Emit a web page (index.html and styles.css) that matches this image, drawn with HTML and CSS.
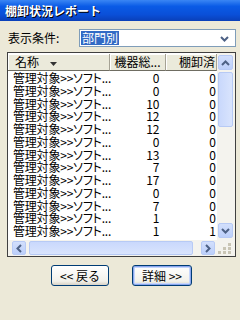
FILE: index.html
```html
<!DOCTYPE html>
<html lang="ja">
<head>
  <meta charset="UTF-8" />
  <title>棚卸状況レポート</title>
  <link rel="stylesheet" href="styles.css">
</head>
<body>
  <div class="titlebar"><span class="title">棚卸状況レポート</span></div>

  <div class="content">
    <div class="filter-row">
      <label class="filter-label">表示条件:</label>
      <div class="combo">
        <span class="combo-value">部門別</span>
        <svg class="combo-arrow" width="9" height="6" viewBox="0 0 9 6"><path d="M1 1 L4.5 4.5 L8 1" fill="none" stroke="#4d6185" stroke-width="2"/></svg>
      </div>
    </div>

    <div class="listview">
      <div class="list-main">
        <div class="list-body">
          <div class="list-header">
            <div class="head col-name">名称 <svg class="sort" width="7" height="4" viewBox="0 0 7 4"><path d="M0 0 H7 L3.5 4 Z" fill="#333"/></svg></div>
            <div class="head col-total">機器総...</div>
            <div class="head col-done">棚卸済</div>
          </div>
          <div id="rows"></div>
        </div>
        <div class="vscroll">
          <div class="sbtn"><svg width="9" height="6" viewBox="0 0 9 6"><path d="M1 5 L4.5 1.5 L8 5" fill="none" stroke="#4d6185" stroke-width="2"/></svg></div>
          <div class="vthumb"></div>
          <div class="sbtn down"><svg width="9" height="6" viewBox="0 0 9 6"><path d="M1 1 L4.5 4.5 L8 1" fill="none" stroke="#4d6185" stroke-width="2"/></svg></div>
        </div>
      </div>
      <div class="hscroll">
        <div class="sbtn hbtn"><svg width="6" height="9" viewBox="0 0 6 9"><path d="M5 1 L1.5 4.5 L5 8" fill="none" stroke="#4d6185" stroke-width="2"/></svg></div>
        <div class="hthumb"></div>
        <div class="sbtn hbtn"><svg width="6" height="9" viewBox="0 0 6 9"><path d="M1 1 L4.5 4.5 L1 8" fill="none" stroke="#4d6185" stroke-width="2"/></svg></div>
        <svg class="grip" width="14" height="14" viewBox="0 0 14 14">
          <rect x="10" y="2" width="3" height="3" fill="#c9c5b5"/>
          <rect x="5" y="6" width="3" height="3" fill="#c9c5b5"/>
          <rect x="10" y="6" width="3" height="3" fill="#c9c5b5"/>
          <rect x="0" y="10" width="3" height="3" fill="#c9c5b5"/>
          <rect x="5" y="10" width="3" height="3" fill="#c9c5b5"/>
          <rect x="10" y="10" width="3" height="3" fill="#c9c5b5"/>
        </svg>
      </div>
    </div>

    <div class="buttons">
      <button class="btn">&lt;&lt; 戻る</button>
      <button class="btn default">詳細 &gt;&gt;</button>
    </div>
  </div>

  <script>
    const totals = [0, 0, 10, 12, 12, 0, 13, 7, 17, 0, 7, 1, 1];
    const done = [0, 0, 0, 0, 0, 0, 0, 0, 0, 0, 0, 0, 1];
    const rows = document.getElementById('rows');
    totals.forEach((t, i) => {
      rows.innerHTML += `<div class="row"><div class="cell col-name">管理対象&gt;&gt;ソフト...</div><div class="cell col-total num">${t}</div><div class="cell col-done num">${done[i]}</div></div>`;
    });
  </script>
</body>
</html>
```

FILE: styles.css
```css
* {
  box-sizing: border-box;
}

body {
  margin: 0;
  width: 240px;
  height: 320px;
  overflow: hidden;
  background: #ece9d8;
  font-family: "Noto Sans CJK JP", "Noto Sans", sans-serif;
  font-size: 12px;
  color: #000;
}

.titlebar {
  height: 21px;
  padding-left: 5px;
  display: flex;
  align-items: center;
  background: linear-gradient(#3a86f4, #0a5be6 30%, #0a4fd8 70%, #0a3fb8);
}

.title {
  color: #fff;
  font-weight: bold;
  line-height: 14px;
  text-shadow: 1px 1px 0 #000;
}

.content {
  padding: 8px 4px 0 7px;
}

.filter-row {
  display: flex;
  align-items: center;
  height: 18px;
}

.filter-label {
  width: 72px;
  padding-left: 1px;
  line-height: 14px;
}

.combo {
  flex: 1;
  height: 18px;
  padding: 1px;
  display: flex;
  align-items: center;
  border: 1px solid #7f9db9;
  background: #fff;
}

.combo-value {
  height: 100%;
  padding: 0 1px;
  line-height: 14px;
  background: #316ac5;
  color: #fff;
}

.combo-arrow {
  margin-left: auto;
  margin-right: 5px;
  margin-top: 2px;
}

.listview {
  margin-top: 5px;
  height: 205px;
  display: flex;
  flex-direction: column;
  border: 1px solid #404040;
  background: #fff;
}

.list-main {
  height: 187px;
  display: flex;
}

.list-body {
  flex: 1;
  padding-top: 1px;
  overflow: hidden;
}

.list-header {
  display: flex;
  height: 17px;
  margin-bottom: 1px;
}

.head {
  height: 17px;
  line-height: 15px;
  background: #ebeadb;
  border-right: 1px solid #a5a294;
  border-bottom: 1px solid #6f6d62;
  box-shadow: inset 1px 1px 0 #fff;
  white-space: nowrap;
  overflow: hidden;
}

.head.col-name {
  padding-left: 7px;
}

.head.col-total {
  padding-left: 5px;
}

.head.col-done {
  text-align: right;
  padding-right: 1px;
}

.sort {
  margin-left: 8px;
  vertical-align: 1px;
}

.col-name {
  width: 102px;
}

.col-total {
  width: 57px;
}

.col-done {
  width: 51px;
}

.row {
  display: flex;
  height: 12.75px;
  line-height: 12.75px;
}

.cell {
  white-space: nowrap;
}

.cell.col-name {
  padding-left: 5px;
  letter-spacing: -0.2px;
  font-feature-settings: "palt";
}

.cell.col-total {
  padding-right: 7px;
}

.cell.col-done {
  padding-right: 1px;
}

.num {
  text-align: right;
}

.vscroll {
  width: 18px;
  padding: 2px 2px 2px 1px;
  display: flex;
  flex-direction: column;
  background: #f4f3ee;
}

.sbtn {
  height: 15px;
  display: flex;
  align-items: center;
  justify-content: center;
  border: 1px solid #b7caf5;
  border-radius: 2px;
  background: linear-gradient(#d2dffc, #bccffa);
}

.sbtn.down {
  margin-top: auto;
}

.vthumb {
  margin-top: 2px;
  height: 55px;
  border: 1px solid #b7caf5;
  border-radius: 2px;
  background: linear-gradient(90deg, #c9d8fc, #d9e4fd);
}

.hscroll {
  height: 16px;
  padding: 1px 2px 1px 4px;
  display: flex;
  align-items: stretch;
  background: #f4f3ee;
}

.hbtn {
  width: 14px;
  height: auto;
}

.hthumb {
  width: 164px;
  margin: 0 8px 0 3px;
  border: 1px solid #b7caf5;
  border-radius: 2px;
  background: linear-gradient(#c9d8fc, #d9e4fd);
}

.grip {
  margin-left: 3px;
  align-self: flex-end;
}

.buttons {
  margin-top: 8px;
  display: flex;
  justify-content: center;
  gap: 23px;
}

.btn {
  width: 58px;
  height: 21px;
  padding: 0;
  font-family: inherit;
  font-size: 12px;
  line-height: 17px;
  color: #000;
  border: 1px solid #003c74;
  border-radius: 3px;
  background: linear-gradient(#fff, #f2f1ea 80%, #d8d2c6);
}

.btn.default {
  width: 60px;
  box-shadow: inset 0 0 0 1px #8aa6ee, inset 0 0 0 2px #c6d6fb;
}
```
